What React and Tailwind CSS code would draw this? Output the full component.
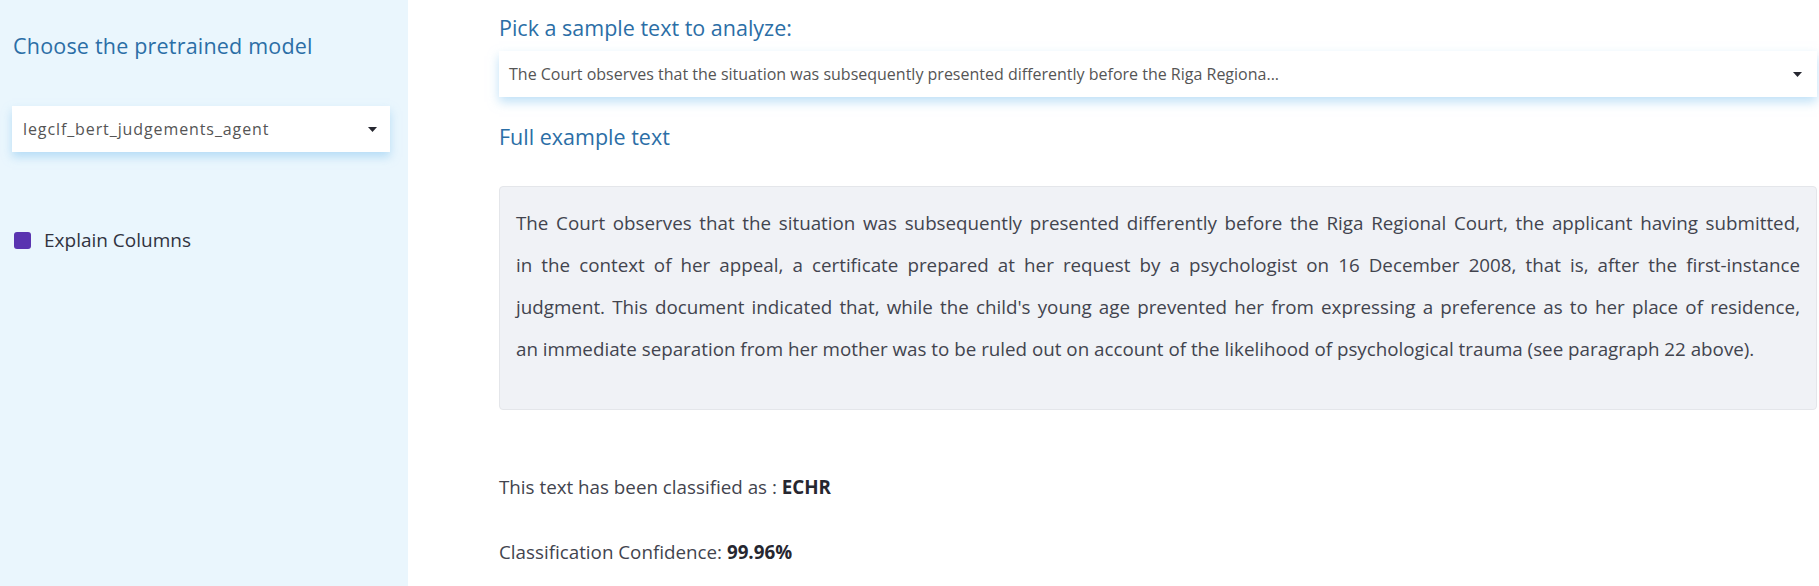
import React, { useState } from "react";

const SAMPLE =
  "The Court observes that the situation was subsequently presented differently before the Riga Regiona...";

const LINES = [
  "The Court observes that the situation was subsequently presented differently before the Riga Regional Court, the applicant having submitted,",
  "in the context of her appeal, a certificate prepared at her request by a psychologist on 16 December 2008, that is, after the first-instance",
  "judgment. This document indicated that, while the child's young age prevented her from expressing a preference as to her place of residence,",
];
const LAST =
  "an immediate separation from her mother was to be ruled out on account of the likelihood of psychological trauma (see paragraph 22 above).";

const Caret = () => (
  <svg width="11" height="7" viewBox="0 0 11 7" className="shrink-0">
    <path d="M1 1h9L5.5 6z" fill="#262730" />
  </svg>
);

const App = () => {
  const [explain, setExplain] = useState(true);

  return (
    <div
      className="flex w-full h-[586px] bg-white text-[#31333f]"
      style={{ fontFamily: "'Open Sans', 'Liberation Sans', sans-serif" }}
    >
      {/* Sidebar */}
      <div className="w-[408px] shrink-0 bg-[#eaf6fd] pl-[12px] pr-[18px] pt-[31px]">
        <h2 className="pl-[1px] text-[21.5px] text-[#2b6ea6] leading-[30px] tracking-[0.2px]">
          Choose the pretrained model
        </h2>
        <div className="mt-[45px] flex h-[46px] items-center justify-between bg-white pl-[11px] pr-[12px] shadow-[0_5px_9px_rgba(140,200,240,0.55)]">
          <span className="text-[16px] tracking-[0.9px] text-[#555]">legclf_bert_judgements_agent</span>
          <Caret />
        </div>
        <label className="mt-[75px] flex h-[26px] items-center gap-[13px] pl-[2px] cursor-pointer">
          <span
            onClick={() => setExplain(!explain)}
            className={`h-[17px] w-[17px] rounded-[3px] ${explain ? "bg-[#5a34b0]" : "bg-white border border-gray-400"}`}
          />
          <span className="text-[19px] text-[#31333f]">Explain Columns</span>
        </label>
      </div>

      {/* Main */}
      <div className="flex-1 pl-[91px] pr-[2px] pt-[13px]">
        <h2 className="text-[21.5px] text-[#2b6ea6] leading-[30px]">
          Pick a sample text to analyze:
        </h2>
        <div className="mt-[8px] flex h-[46px] items-center justify-between bg-white pl-[10px] pr-[14px] shadow-[0_5px_10px_rgba(140,200,240,0.55)]">
          <span className="text-[16px] text-[#555]">{SAMPLE}</span>
          <Caret />
        </div>
        <h2 className="mt-[25px] text-[21.5px] text-[#2b6ea6] leading-[30px]">
          Full example text
        </h2>
        <div className="mt-[34px] h-[224px] rounded-[4px] border border-[#e4e6ea] bg-[#f0f2f6] px-[16px] pt-[15px] text-[18.8px] leading-[42px] text-[#42444e]">
          {LINES.map((l) => (
            <div key={l} className="text-justify [text-align-last:justify]">
              {l}
            </div>
          ))}
          <div>{LAST}</div>
        </div>
        <p className="mt-[63px] text-[18.8px] leading-[28px] text-[#42444e]">
          This text has been classified as : <b className="font-bold text-[#262730]">ECHR</b>
        </p>
        <p className="mt-[37px] text-[18.8px] leading-[28px] text-[#42444e]">
          Classification Confidence: <b className="font-bold text-[#262730]">99.96%</b>
        </p>
      </div>
    </div>
  );
};

export default App;
